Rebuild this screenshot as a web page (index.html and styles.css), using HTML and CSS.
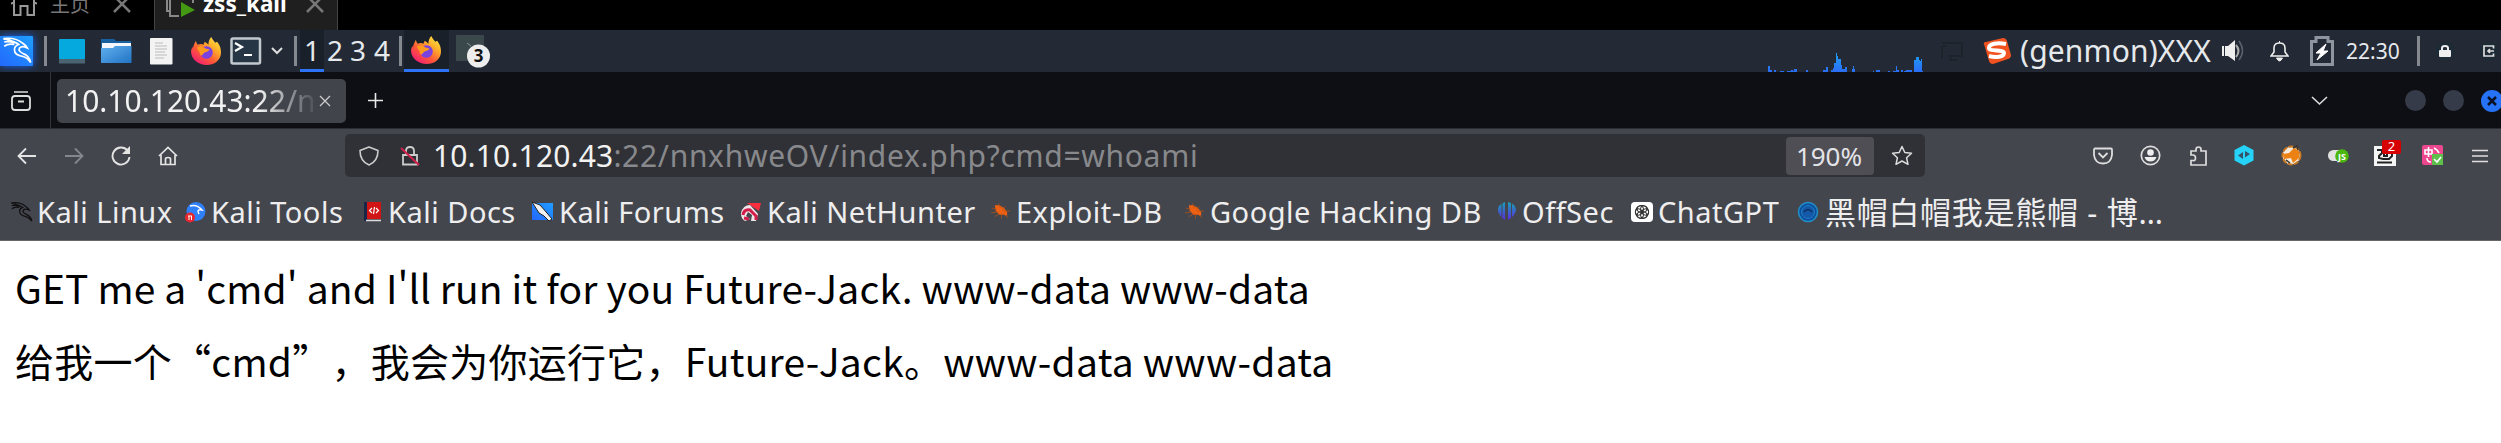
FILE: index.html
```
<!DOCTYPE html>
<html lang="zh-CN">
<head>
<meta charset="utf-8">
<title>10.10.120.43:22</title>
<link rel="stylesheet" href="styles.css">
</head>
<body>
<svg class="defs" width="0" height="0">
  <defs>
    <linearGradient id="flame" x1="1" y1="0" x2="0.2" y2="1"><stop offset="0" stop-color="#fff44f"/><stop offset=".35" stop-color="#ffb02a"/><stop offset=".65" stop-color="#ff5a36"/><stop offset="1" stop-color="#f0187a"/></linearGradient>
    <linearGradient id="blue" x1="1" y1="0" x2="0" y2="1"><stop offset="0" stop-color="#1f9dff"/><stop offset="1" stop-color="#2367fb"/></linearGradient>
    <linearGradient id="folder" x1="0" y1="0" x2="1" y2="1"><stop offset="0" stop-color="#5fb0ee"/><stop offset="1" stop-color="#2273c4"/></linearGradient>
    <linearGradient id="offsec" x1="0" y1="0" x2="0" y2="1"><stop offset="0" stop-color="#16a3b8"/><stop offset="1" stop-color="#5a2be0"/></linearGradient>
    <linearGradient id="graph" x1="0" y1="0" x2="0" y2="1"><stop offset="0" stop-color="#1ea0f5"/><stop offset="1" stop-color="#2a6df5"/></linearGradient>
    <symbol id="firefox" viewBox="0 0 32 30">
      <path d="M2 13C2 9 4 6 5 4c.5 2 1 3 2 4 2-1 4-1 6 0 0-1 1-2 1-3 2 1 3 2 4 3C18 5 19 2 21 0c1 3 3 4 4 6l2-1c3 4 4 7 4 11 0 8-7 13-15 13S0 23 0 15c0-2 1-4 2-5z" fill="url(#flame)"/>
      <circle cx="16" cy="16" r="6.500" fill="#7a43e0"/><path d="M6 11c3-2 7-1 9 1l4 1c-1 3-5 2-7 5-1 2-3 1-3-2-1-2-2-3-3-5z" fill="#ff9a1f"/>
    </symbol>
    <symbol id="bug" viewBox="0 0 20 20"><path d="M4 4l5 0 5 3 3 4 0 4-4-1-4 0-4-4z" fill="#ee6114"/><path d="M1 7l5 1M0 12l7-1M4 16l5-3M8 2l2 5M15 5l-3 4M20 10l-7 0M11 18l0-5M18 17l-5-4" stroke="#b5500f" stroke-width=".8"/></symbol>
    <symbol id="dragon" viewBox="0 0 34 34"><path d="M1 3c8-1 16 0 22 5 3 2 5 4 6 6-4-2-7-2-9 0-2 3 1 5 5 7 5 2 7 5 8 10-3-4-5-6-9-7-6-1-10-4-10-8 0-3 2-5 5-6C14 6 8 5 1 3M2 7c5-1 9 0 12 1M2 12c4-3 8-3 12-2" fill="none" stroke="currentColor" stroke-width="2"/></symbol>
  </defs>
</svg>

<header class="vm-tabs">
  <svg class="vm-home" width="26" height="16" viewBox="0 0 26 16"><path d="M0 4L3 1.500M26 4L23 1.500M3 0V15H9.500V6H16.500V15H23V0" fill="none" stroke="#999" stroke-width="2"/></svg>
  <span class="vm-label">主页</span>
  <svg width="18" height="13" viewBox="0 0 18 13"><path d="M1-4L17 12M17-4L1 12" stroke="#777" stroke-width="2.500"/></svg>
  <div class="vm-active">
    <svg width="30" height="18" viewBox="0 0 30 18"><path d="M2 0V11H5M5 0V16H14M28 0V3" fill="none" stroke="#888" stroke-width="2"/><path d="M16 2L30 10 16 17z" fill="#439a12"/></svg>
    <span>zss_kali</span>
    <svg width="18" height="13" viewBox="0 0 18 13"><path d="M1-4L17 12M17-4L1 12" stroke="#777" stroke-width="2.500"/></svg>
  </div>
</header>

<nav class="panel">
  <svg class="kali-menu" width="34" height="30" viewBox="0 0 34 30"><rect x="-2" width="35" height="30" rx="1" fill="url(#blue)"/><use href="#dragon" width="34" height="29" color="#fff"/></svg>
  <i class="sep"></i>
  <svg width="26" height="25"><rect width="26" height="20" rx="1" fill="#05a9de"/><rect y="20" width="26" height="4.500" fill="#4a6472"/></svg>
  <svg width="31" height="26"><path d="M0 1H13L15 3H30V10H0z" fill="#1761a0"/><path d="M1 5H30V12H1z" fill="#f4f8fc"/><path d="M0 10H12L14 8H30.500V25H0z" fill="url(#folder)"/></svg>
  <svg width="23" height="27"><rect width="22.500" height="26.500" rx="1" fill="#f3f3f3"/><path d="M5 5H13M5 8H17M5 11H17M5 14H15M5 17H17M5 20H14" stroke="#bbb"/></svg>
  <svg width="31" height="29"><use href="#firefox" width="31" height="29"/></svg>
  <svg width="32" height="28"><rect x="1.500" y="1.500" width="28.500" height="25" rx="1.500" fill="#263645" stroke="#c3c9ce" stroke-width="2.500"/><path d="M5 6L12 10 5 14M14 18H22" fill="none" stroke="#fff" stroke-width="2.200"/></svg>
  <svg width="12" height="8"><path d="M1 1L6 6 11 1" fill="none" stroke="#ddd" stroke-width="2"/></svg>
  <i class="sep"></i>
  <span class="ws current">1</span><span class="ws">2</span><span class="ws">3</span><span class="ws">4</span>
  <i class="sep"></i>
  <div class="task"><svg width="31" height="29"><use href="#firefox" width="31" height="29"/></svg></div>
  <svg width="36" height="34"><rect y="1" width="28" height="26" rx="1" fill="#3a474b"/><path d="M11 9L15 12" stroke="#8a9295"/><circle cx="22.500" cy="22" r="11.500" fill="#ededed"/><text x="22.500" y="28" class="count">3</text></svg>
  <svg class="graph" width="157" height="20" viewBox="0 0 157 20"><path d="M1 20V14H3V18H5V20zM7 20V18H9V20zM13 20V19H17V20zM20 20V19H24V18H26V19H27V17H30V20zM39 20V18H41V20zM56 20V18H59V15H61V20zM64 20V18H66V16H67V11H69V1H70V4H71V7H74V13H75V17H78V15H80V20zM85 20V17H86V14H87V17H88V20zM106 20V19H107V20zM109 20V18H113V20zM121 20V19H123V20zM126 20V19H129V14H130V18H132V20zM134 20V18H136V20zM137 20V19H139V18H145V20zM147 20V8H149V5H152V8H153V9H154V7H155V19H156V20z" fill="url(#graph)"/></svg>
  <svg width="22" height="20"><path d="M1 2H21V15H7M1 5V18M1 5H5M8 19H16M10 15V19" fill="none" stroke="#1c232b" stroke-width="2"/></svg>
  <svg width="29" height="27"><path d="M1 6Q0 4 3 4L20 0Q23 0 24 3L28 17Q28 20 25 21L10 26Q7 26 6 23z" fill="#f15320"/><path d="M23 6C14 4 6 6 6 10c0 4 15 1 15 5 0 4-8 5-15 3" fill="none" stroke="#fff" stroke-width="4"/></svg>
  <span class="genmon">(genmon)XXX</span>
  <svg width="23" height="22"><path d="M0 6H2V16H0zM3 6H6L13 0V21L6 16H3z" fill="#eee"/><path d="M14 5Q19 11 14 17" fill="none" stroke="#aaa" stroke-width="2"/><path d="M17 1Q24 11 17 20" fill="none" stroke="#59616b" stroke-width="1.500"/></svg>
  <svg width="19" height="21"><path d="M1 15H18L15 11V7C15 3 12 2 9.500 2S4 3 4 7V11z" fill="none" stroke="#eee" stroke-width="1.600"/><path d="M9.500 0V2M6.500 17H12.500Q11 20 9.500 20T6.500 17" stroke="#eee" fill="#eee"/></svg>
  <svg width="24" height="30"><path d="M1.500 28.500V5.500H6V1.500H18V5.500H22.500V28.500z" fill="none" stroke="#8f959e" stroke-width="3"/><path d="M16 8L6 17H11L7 24 18 15H13z" fill="#fff" stroke="#fff" stroke-width="1"/></svg>
  <span class="clock">22:30</span>
  <i class="sep"></i>
  <svg width="20" height="20"><circle cx="10" cy="10" r="9.500" fill="#1c2b35"/><rect x="4" y="9" width="12" height="7" rx="1" fill="#eee"/><path d="M7 9V7Q7 5 10 5T13 7V9" fill="none" stroke="#eee" stroke-width="2"/></svg>
  <svg width="20" height="20"><circle cx="10" cy="10" r="9.500" fill="#1c2b35"/><path d="M14.500 7.500V5H5V15H14.500V12.500M15 10H9.500M11 8L9 10 11 12" fill="none" stroke="#ddd" stroke-width="1.700"/></svg>
</nav>

<div class="tabbar">
  <svg width="22" height="20"><path d="M4 1H18" stroke="#ddd" stroke-width="1.500"/><path d="M2 8Q2 5 5 5H17Q20 5 20 8V16Q20 19 17 19H5Q2 19 2 16zM8 10.500H14" fill="none" stroke="#ddd" stroke-width="1.800"/></svg>
  <i class="tab-divider"></i>
  <div class="tab"><span class="tab-title">10.10.120.43:22/n</span><svg width="12" height="12"><path d="M1 1L11 11M11 1L1 11" stroke="#ccc" stroke-width="1.300"/></svg></div>
  <svg width="17" height="17"><path d="M8.500 1V16M1 8.500H16" stroke="#e8e8e8" stroke-width="1.600"/></svg>
  <svg width="17" height="10"><path d="M1 1L8.500 8 16 1" fill="none" stroke="#ddd" stroke-width="1.600"/></svg>
  <i class="win"></i><i class="win"></i>
  <i class="win close"><svg width="12" height="12"><path d="M2 2L10 10M10 2L2 10" stroke="#0b1224" stroke-width="2.500"/></svg></i>
</div>

<div class="toolbar">
  <svg width="20" height="18"><path d="M19 9H2M9 1.500L1.500 9 9 16.500" fill="none" stroke="#e4e4e4" stroke-width="1.800"/></svg>
  <svg width="20" height="18"><path d="M1 9H18M11 1.500L18.500 9 11 16.500" fill="none" stroke="#85878c" stroke-width="1.800"/></svg>
  <svg width="20" height="20"><path d="M16.500 4.500A8.500 8.500 0 1 0 18.500 11" fill="none" stroke="#e4e4e4" stroke-width="1.900"/><path d="M19 0V8H11z" fill="#e4e4e4"/></svg>
  <svg width="20" height="20"><path d="M1 10L10 1.500 19 10M3 9V18.500H17V9M7.500 18V13Q7.500 11.500 10 11.500T12.500 13V18" fill="none" stroke="#e4e4e4" stroke-width="1.700"/></svg>
  <div class="urlbar">
    <svg width="20" height="20"><path d="M10 1L19 4.500C19 12 16 16.500 10 19 4 16.500 1 12 1 4.500z" fill="none" stroke="#ccc" stroke-width="1.600" stroke-linejoin="round"/></svg>
    <svg width="20" height="20"><path d="M3 9H17V18.500H3zM6 9V5Q6 1 10 1T14 5V9" fill="none" stroke="#ccc" stroke-width="1.800"/><path d="M1 2L19 19" stroke="#d1204c" stroke-width="2"/></svg>
    <span class="url"><b>10.10.120.43</b>:22/nnxhweOV/index.php?cmd=whoami</span>
    <span class="zoom">190%</span>
    <svg width="22" height="21" viewBox="0 0 22 21"><path d="M11 1.500L13.800 7.500 20.500 8.300 15.600 12.800 17 19.300 11 16 5 19.300 6.400 12.800 1.500 8.300 8.200 7.500z" fill="none" stroke="#ddd" stroke-width="1.500" stroke-linejoin="round"/></svg>
  </div>
  <svg width="20" height="18"><path d="M2 1.500H18Q19 1.500 19 3V8Q18 16.500 10 16.500T1 8V3Q1 1.500 2 1.500zM5.500 6L10 10.500 14.500 6" fill="none" stroke="#ddd" stroke-width="1.800"/></svg>
  <svg width="21" height="21"><circle cx="10.500" cy="10.500" r="9.200" fill="none" stroke="#ddd" stroke-width="1.700"/><circle cx="10.500" cy="7.500" r="3.300" fill="#eee"/><path d="M4.500 12H16.500Q15 16.500 10.500 16.500T4.500 12" fill="#eee"/></svg>
  <svg width="19" height="20"><path d="M2 19H17V5H12V3.500Q12 1 9.500 1T7 3.500V5H2V9H4Q6.500 9 6.500 12T4 14.500H2z" fill="none" stroke="#ddd" stroke-width="1.700"/></svg>
  <svg width="20" height="21"><path d="M10 0L19.500 5V15.500L10 20.500 .5 15.500V5z" fill="#24d3f7"/><path d="M9 7V14L4 10.500zM11 6V12.500L16 9z" fill="#35536b"/></svg>
  <svg width="21" height="21"><circle cx="10.500" cy="10.500" r="9" fill="#f5eadb" stroke="#c87822" stroke-width="2" stroke-dasharray="5 1.500"/><path d="M2 9L8 8 13 3 18 6 18 13 12 18 10 13 3 14z" fill="#ec8213"/><path d="M12 3L16 1 17 5M5 15L9 18" stroke="#333" stroke-width="1.500" fill="none"/></svg>
  <svg width="21" height="14"><rect y="1" width="19" height="11" rx="5.500" fill="#e2e2e2"/><circle cx="14" cy="7" r="6.800" fill="#4ab80e"/><text x="14" y="10.500" class="js">JS</text></svg>
  <div class="ext"><svg width="22" height="20"><rect width="22" height="20" fill="#f4f4f4"/><path d="M3 4H8V7L5 10V12L9 13H15L18 10V5M10 7H13V10H10zM3 16.500H18" fill="none" stroke="#222" stroke-width="2"/></svg><span class="badge">2</span></div>
  <svg width="22" height="21"><rect width="21" height="20" rx="2" fill="#ed4790"/><path d="M3 5H10V9H3zM6.500 2V12M12 3L15 5 17 8M5 13Q5 17 9 17" fill="none" stroke="#fff" stroke-width="1.600"/><rect x="10" y="9" width="11" height="11" fill="#5cc04b"/><path d="M12 14L15 17 19 12" fill="none" stroke="#fff" stroke-width="1.600"/></svg>
  <svg width="18" height="14"><path d="M1 1.500H17M1 7H17M1 12.500H17" stroke="#ddd" stroke-width="1.700"/></svg>
</div>

<nav class="bookmarks">
  <a><svg width="24" height="22"><use href="#dragon" width="23" height="22" color="#111"/></svg>Kali Linux</a>
  <a><svg width="23" height="22"><circle cx="11" cy="10.500" r="9.500" fill="#2f80f8"/><path d="M5 5Q12 3 17 9 11 8 14 13" fill="none" stroke="#fff" stroke-width="1.500"/><circle cx="5" cy="16.500" r="5" fill="#e8262d"/><path d="M3 15H7M4 15V19M6.500 15V19" stroke="#fff"/></svg>Kali Tools</a>
  <a><svg width="21" height="22"><rect y="1" width="3" height="19" fill="#1b2548"/><rect x="3" y="1" width="14" height="17" fill="#d11414"/><path d="M2 19.500H17" stroke="#ddd" stroke-width="1.500"/><path d="M8 7L5.500 9.500 8 12M12 7L14.500 9.500 12 12M10.500 6L9.500 13" fill="none" stroke="#fff" stroke-width="1.200"/></svg>Kali Docs</a>
  <a><svg width="24" height="22"><rect y="2" width="21" height="17" fill="url(#blue)"/><path d="M0 1L8 4 15 12 20 18 17 20 12 15 7 12z" fill="#f0f0f0" stroke="#222" stroke-width="1"/></svg>Kali Forums</a>
  <a><svg width="24" height="22"><path d="M7 2L21 2 19 10z" fill="#fa2e3c"/><path d="M1 12Q3 4 10 4L18 13 16 20 11 20 12 14 8 11 6 15 10 18 5 20Q1 18 1 12" fill="#f0e6e8"/><path d="M3 14Q4 8 10 9L16 15V19M9 18L4 17" fill="none" stroke="#d21d4a" stroke-width="3"/></svg>Kali NetHunter</a>
  <a><svg width="22" height="22"><use href="#bug" width="19" height="20"/></svg>Exploit-DB</a>
  <a><svg width="22" height="22"><use href="#bug" width="19" height="20"/></svg>Google Hacking DB</a>
  <a><svg width="22" height="22"><path d="M8 1Q0 4 1 10 2 15 8 19zM11 1V19Q18 15 19 9 19 3 11 1" fill="url(#offsec)"/><path d="M5 1V17M14.500 1V17" stroke="#444650" stroke-width="1"/></svg>OffSec</a>
  <a><svg width="24" height="22"><rect y="1" width="22" height="20" rx="4" fill="#fff"/><g fill="none" stroke="#333" stroke-width="1.200"><ellipse cx="11" cy="8" rx="5" ry="3.500"/><ellipse cx="11" cy="8" rx="5" ry="3.500" transform="rotate(60 11 11)"/><ellipse cx="11" cy="8" rx="5" ry="3.500" transform="rotate(120 11 11)"/><ellipse cx="11" cy="8" rx="5" ry="3.500" transform="rotate(180 11 11)"/><ellipse cx="11" cy="8" rx="5" ry="3.500" transform="rotate(240 11 11)"/><ellipse cx="11" cy="8" rx="5" ry="3.500" transform="rotate(300 11 11)"/></g></svg>ChatGPT</a>
  <a class="cjk"><svg width="25" height="22"><circle cx="11" cy="11" r="9.500" fill="#0d4e9c" stroke="#2190ca" stroke-width="1.500"/><circle cx="11" cy="11" r="6.500" fill="#1559a8" stroke="#1c7fc4"/><path d="M7 11Q11 6 15 11" fill="none" stroke="#0b2d5d" stroke-width="1.500"/></svg>黑帽白帽我是熊帽 - 博…</a>
</nav>

<main class="page">
  <p>GET me a 'cmd' and I'll run it for you Future-Jack. www-data www-data</p>
  <p>给我一个“cmd”，我会为你运行它，Future-Jack。www-data www-data</p>
</main>
</body>
</html>
```
FILE: styles.css
```
* { box-sizing: border-box; }
body { margin: 0; width: 2501px; height: 443px; overflow: hidden; background: #fff; font-family: "Noto Sans", "Noto Sans CJK SC", sans-serif; }
svg { display: block; flex: none; }
.defs { position: absolute; }
i { display: block; }

.vm-tabs { height: 30px; background: #000; display: grid; grid-template-columns: 39px 63px 41px 184px; padding-left: 11px; overflow: hidden; }
.vm-label { color: #777; font: 20px/20px "Noto Sans CJK SC", sans-serif; margin-top: -6px; }
.vm-active { height: 30px; background: #1f1f1f; border-left: 1px solid #444; border-right: 1px solid #444; display: grid; grid-template-columns: 38px 103px 20px; padding-left: 10px; color: #fff; font: bold 22.500px/24px "Noto Sans", sans-serif; }
.vm-active span { margin-top: -8px; }

.panel { height: 42px; background: #232a35; color: #e6e9ec; display: grid; align-items: center; overflow: hidden; font-size: 28px;
  grid-template-columns: 44px 15px 42px 49px 41px 39px 41px 23px 6px 26px 23px 24px 26px 5px 52px 1311px 174px 42px 37px 202px 48px 40px 36px 71px 18px 44px 22px; }
.kali-menu { filter: drop-shadow(0 0 4px #1767ff); }
.sep { width: 3px; height: 30px; background: #85898f; }
.ws { line-height: 40px; height: 42px; padding-left: 1px; }
.current { width: 24px; padding-left: 4px; background: #1a202a; border-bottom: 3px solid #2d73f5; }
.task { width: 45px; height: 42px; padding: 6px 7px; background: #1a202a; border-bottom: 3px solid #2d73f5; }
.count { font: bold 17px "Noto Sans", sans-serif; text-anchor: middle; fill: #111; }
.graph { align-self: end; }
.genmon { font-size: 30px; line-height: 42px; letter-spacing: .15px; }
.clock { font-size: 21px; }

.tabbar { height: 57px; background: #0e0f14; border-bottom: 1px solid #2c2d33; display: grid; align-items: center; padding-left: 10px; grid-template-columns: 40px 7px 310px 1944px 94px 38px 38px 24px; }
.tab-divider { width: 1px; height: 57px; background: #33343a; }
.tab { width: 289px; height: 44px; border-radius: 5px; background: #42444c; display: flex; align-items: center; padding-left: 8px; gap: 5px; }
.tab-title { width: 249px; overflow: hidden; white-space: nowrap; font-size: 30px; line-height: 44px; color: #f2f2f2; -webkit-mask-image: linear-gradient(to right, #000 78%, transparent 102%); mask-image: linear-gradient(to right, #000 78%, transparent 102%); }
.win { width: 21px; height: 21px; border-radius: 50%; background: #363b49; }
.close { width: 22px; height: 22px; background: #2673f7; padding: 5px; }

.toolbar { height: 53px; background: #44464e; display: grid; align-items: center; padding-left: 17px; grid-template-columns: 47px 47px 47px 187px 1748px 47px 49px 45px 47px 47px 46px 48px 49px 30px; }
.urlbar { width: 1580px; height: 43px; border-radius: 5px; background: #303136; display: grid; align-items: center; padding-left: 14px; grid-template-columns: 41px 33px 1353px 105px 22px; }
.url { font-size: 30px; line-height: 42px; color: #88898c; white-space: nowrap; letter-spacing: .69px; }
.url b { font-weight: 400; color: #f2f2f2; letter-spacing: .15px; }
.zoom { width: 88px; height: 38px; background: #4e4e54; border-radius: 4px; color: #e4e4e8; font-size: 26px; line-height: 38px; text-align: center; padding-right: 2px; }
.ext { position: relative; width: 22px; }
.badge { position: absolute; left: 8px; top: -6px; width: 19px; height: 14px; border-radius: 2px; background: #d70000; color: #fff; font-size: 13px; line-height: 13px; text-align: center; }
.js { font: bold 9px "Noto Sans", sans-serif; text-anchor: middle; fill: #fff; }

.bookmarks { height: 59px; background: #44464e; border-bottom: 1px solid #66676b; display: grid; padding-left: 10px; grid-template-columns: 175px 179px 168px 208px 251px 194px 312px 134px 166px 420px; }
.bookmarks a { display: flex; align-items: center; gap: 3px; color: #eee; font-size: 29px; line-height: 58px; white-space: nowrap; letter-spacing: .5px; padding-top: 1px; }
.bookmarks .cjk { font-size: 31px; letter-spacing: .7px; }

.page { padding: 10px 15px; color: #000; font-family: "Noto Sans CJK SC", sans-serif; font-size: 39px; letter-spacing: .13px; text-spacing-trim: space-all; }
.page p { margin: 0; height: 73px; line-height: 73px; white-space: nowrap; }
.page p + p { letter-spacing: .25px; }
```
